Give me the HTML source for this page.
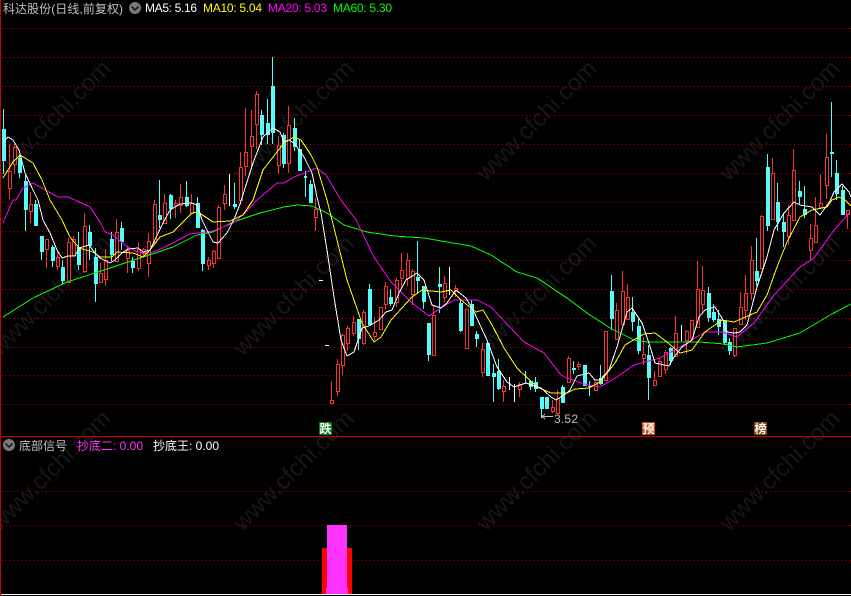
<!DOCTYPE html>
<html lang="zh"><head><meta charset="utf-8"><title>科达股份</title>
<style>
html,body{margin:0;padding:0;background:#000;width:851px;height:596px;overflow:hidden}
svg{display:block;position:absolute;left:0;top:0}
text{font-family:"Liberation Sans","Noto Sans CJK SC",sans-serif;font-size:12px}
.wm{font-size:24px;fill:#171717}
.l{fill:none;stroke-width:1;shape-rendering:crispEdges}
</style></head><body>
<svg width="851" height="596" viewBox="0 0 851 596" xmlns="http://www.w3.org/2000/svg">
<rect width="851" height="596" fill="#000"/>
<!-- watermarks -->
<g class="wm" text-anchor="middle">
<text class="wm" transform="translate(56,126) rotate(-45)">www.cfchi.com</text>
<text class="wm" transform="translate(299,126) rotate(-45)">www.cfchi.com</text>
<text class="wm" transform="translate(542,126) rotate(-45)">www.cfchi.com</text>
<text class="wm" transform="translate(785,126) rotate(-45)">www.cfchi.com</text>
<text class="wm" transform="translate(56,301) rotate(-45)">www.cfchi.com</text>
<text class="wm" transform="translate(299,301) rotate(-45)">www.cfchi.com</text>
<text class="wm" transform="translate(542,301) rotate(-45)">www.cfchi.com</text>
<text class="wm" transform="translate(785,301) rotate(-45)">www.cfchi.com</text>
<text class="wm" transform="translate(56,476) rotate(-45)">www.cfchi.com</text>
<text class="wm" transform="translate(299,476) rotate(-45)">www.cfchi.com</text>
<text class="wm" transform="translate(542,476) rotate(-45)">www.cfchi.com</text>
<text class="wm" transform="translate(785,476) rotate(-45)">www.cfchi.com</text>
</g>
<!-- grid -->
<path stroke="#b00000" stroke-width="1" stroke-dasharray="1 3" fill="none" shape-rendering="crispEdges" d="M2 28.5H851M2 57.5H851M2 86.5H851M2 115.5H851M2 144.5H851M2 173.5H851M2 202.5H851M2 231.5H851M2 260.5H851M2 289.5H851M2 318.5H851M2 347.5H851M2 375.5H851M2 404.5H851M2 491.5H851M2 525.5H851M2 560.5H851"/>
<g shape-rendering="crispEdges">
<!-- cyan wicks -->
<path stroke="#55fcfc" fill="none" d="M3.5 109V174M19.5 155V178M25.5 174V231M35.5 200V226M41.5 236V260M52.5 245V267M62.5 260V284M78.5 232V270M89.5 225V260M95.5 248V302M111.5 232V261M121.5 222V250M132.5 257V273M159.5 180V228M170.5 194V219M186.5 181V207M197.5 197V228M202.5 229V271M234.5 183V209M261.5 110V145M267.5 99V144M272.5 57V144M283.5 133V168M294.5 118V151M299.5 140V171M305.5 171V197M310.5 180V203M358.5 319V350M369.5 284V326M390.5 289V306M417.5 241V294M423.5 286V309M428.5 323V361M439.5 267V313M460.5 300V332M471.5 300V326M476.5 331V347M487.5 341V376M493.5 364V402M498.5 359V390M525.5 371V383M530.5 380V390M535.5 377V392M541.5 397V418M546.5 397V409M562.5 385V403M573.5 361V374M584.5 365V386M589.5 381V396M600.5 365V385M611.5 275V330M632.5 297V331M638.5 319V354M648.5 345V400M670.5 347V365M708.5 287V322M713.5 304V322M718.5 310V335M724.5 320V345M729.5 338V355M756.5 238V286M767.5 154V231M777.5 183V231M783.5 213V247M799.5 181V205M804.5 186V218M831.5 102V177M836.5 160V200M842.5 186V215"/>
<!-- cyan bodies -->
<path fill="#55fcfc" d="M2 129h4V161h-4zM18 158h4V173h-4zM24 181h4V210h-4zM34 204h4V226h-4zM40 236h4V252h-4zM51 247h4V261h-4zM61 267h4V281h-4zM77 247h4V265h-4zM88 232h4V246h-4zM94 257h4V284h-4zM110 239h4V255h-4zM120 228h4V242h-4zM131 261h4V268h-4zM158 215h4V220h-4zM169 195h4V209h-4zM185 197h4V206h-4zM196 203h4V228h-4zM201 230h4V264h-4zM233 204h4V207h-4zM260 115h4V135h-4zM266 123h4V135h-4zM271 86h4V133h-4zM282 135h4V164h-4zM293 128h4V147h-4zM298 149h4V171h-4zM304 176h3V178h-3zM309 184h4V203h-4zM357 319h4V339h-4zM368 289h4V325h-4zM389 297h4V304h-4zM416 277h4V281h-4zM422 286h4V302h-4zM427 323h4V355h-4zM438 284h4V287h-4zM459 303h4V331h-4zM470 304h4V326h-4zM475 334h4V339h-4zM486 343h4V376h-4zM492 373h4V377h-4zM497 371h4V389h-4zM529 381h4V387h-4zM534 382h4V389h-4zM540 397h4V409h-4zM545 397h4V409h-4zM561 387h4V403h-4zM572 368h4V370h-4zM583 365h4V386h-4zM588 386h3V387h-3zM599 378h4V384h-4zM610 291h4V319h-4zM631 312h4V322h-4zM637 326h4V351h-4zM647 355h4V378h-4zM669 348h4V361h-4zM707 293h4V318h-4zM712 312h4V320h-4zM717 319h4V327h-4zM723 321h4V343h-4zM728 342h4V351h-4zM755 271h4V281h-4zM766 167h4V226h-4zM776 202h4V222h-4zM782 222h4V232h-4zM798 191h4V197h-4zM803 209h4V215h-4zM830 152h4V154h-4zM835 173h4V194h-4zM841 190h4V215h-4z"/>
<!-- white dojis -->
<path stroke="#fff" fill="none" d="M229.5 174V206M449.5 267V295M509.5 377V390M514.5 384V402M681.5 325V341M319 280.5H323M325 345.5H329"/>
<!-- red wicks -->
<path stroke="#f83232" fill="none" d="M9.5 144V199M14.5 144V174M30.5 192V223M46.5 239V268M57.5 250V270M68.5 238V283M73.5 236V256M84.5 213V273M100.5 263V283M105.5 249V286M116.5 219V262M127.5 246V273M138.5 242V271M143.5 248V257M148.5 233V277M154.5 200V244M164.5 194V224M175.5 200V218M180.5 184V213M191.5 194V213M208.5 257V270M213.5 250V268M218.5 205V258M224.5 185V210M240.5 152V205M245.5 108V176M251.5 110V170M256.5 91V149M278.5 136V174M288.5 106V173M315.5 198V231M331.5 381V404M337.5 359V396M342.5 334V375M347.5 326V351M353.5 316V336M363.5 310V345M374.5 317V340M380.5 307V330M385.5 282V310M396.5 278V307M401.5 253V289M407.5 253V286M412.5 269V305M433.5 306V355M444.5 276V302M455.5 285V297M466.5 309V348M482.5 343V377M503.5 380V402M519.5 382V397M552.5 400V413M557.5 390V413M568.5 356V382M578.5 362V370M595.5 381V391M605.5 331V381M616.5 303V340M622.5 271V325M627.5 284V320M643.5 337V365M654.5 371V386M659.5 358V377M665.5 350V374M675.5 316V356M686.5 330V354M691.5 320V340M697.5 261V327M702.5 266V313M734.5 328V357M740.5 292V325M745.5 275V320M751.5 246V300M761.5 215V269M772.5 158V220M788.5 205V245M793.5 149V220M810.5 224V261M815.5 197V242M820.5 174V208M826.5 134V199M847.5 210V229"/>
<!-- red bodies -->
<path stroke="#f83232" fill="#000" d="M8.5 171.5h3V188.5h-3zM13.5 147.5h3V164.5h-3zM29.5 204.5h3V211.5h-3zM45.5 239.5h3V249.5h-3zM56.5 257.5h3V266.5h-3zM67.5 242.5h3V282.5h-3zM72.5 239.5h3V255.5h-3zM83.5 226.5h3V271.5h-3zM99.5 273.5h3V282.5h-3zM104.5 260.5h3V279.5h-3zM115.5 232.5h3V261.5h-3zM126.5 250.5h3V258.5h-3zM137.5 249.5h3V268.5h-3zM142.5 249.5h3V253.5h-3zM147.5 241.5h3V263.5h-3zM153.5 204.5h3V242.5h-3zM163.5 203.5h3V223.5h-3zM174.5 203.5h3V205.5h-3zM179.5 197.5h3V205.5h-3zM190.5 203.5h3V213.5h-3zM207.5 260.5h3V265.5h-3zM212.5 251.5h3V263.5h-3zM217.5 207.5h3V258.5h-3zM223.5 194.5h3V203.5h-3zM239.5 167.5h3V200.5h-3zM244.5 152.5h3V166.5h-3zM250.5 136.5h3V146.5h-3zM255.5 94.5h3V124.5h-3zM277.5 145.5h3V165.5h-3zM287.5 125.5h3V163.5h-3zM314.5 209.5h3V217.5h-3zM330.5 400.5h3V403.5h-3zM336.5 364.5h3V391.5h-3zM341.5 335.5h3V365.5h-3zM346.5 328.5h3V343.5h-3zM352.5 322.5h3V333.5h-3zM362.5 312.5h3V343.5h-3zM373.5 332.5h3V336.5h-3zM379.5 307.5h3V329.5h-3zM384.5 286.5h3V304.5h-3zM395.5 280.5h3V302.5h-3zM400.5 270.5h3V278.5h-3zM406.5 260.5h3V278.5h-3zM411.5 271.5h3V294.5h-3zM432.5 315.5h3V355.5h-3zM443.5 283.5h3V297.5h-3zM454.5 288.5h3V291.5h-3zM465.5 309.5h3V348.5h-3zM481.5 349.5h3V372.5h-3zM502.5 386.5h3V391.5h-3zM518.5 384.5h3V389.5h-3zM551.5 407.5h3V411.5h-3zM556.5 398.5h3V413.5h-3zM567.5 358.5h3V382.5h-3zM577.5 364.5h3V366.5h-3zM594.5 382.5h3V390.5h-3zM604.5 331.5h3V380.5h-3zM615.5 310.5h3V339.5h-3zM621.5 291.5h3V324.5h-3zM626.5 297.5h3V319.5h-3zM642.5 354.5h3V358.5h-3zM653.5 380.5h3V385.5h-3zM658.5 361.5h3V376.5h-3zM664.5 352.5h3V369.5h-3zM674.5 333.5h3V356.5h-3zM685.5 331.5h3V340.5h-3zM690.5 320.5h3V338.5h-3zM696.5 289.5h3V327.5h-3zM701.5 290.5h3V304.5h-3zM733.5 328.5h3V355.5h-3zM739.5 307.5h3V324.5h-3zM744.5 293.5h3V310.5h-3zM750.5 260.5h3V293.5h-3zM760.5 216.5h3V268.5h-3zM771.5 173.5h3V219.5h-3zM787.5 215.5h3V236.5h-3zM792.5 170.5h3V220.5h-3zM809.5 238.5h3V250.5h-3zM814.5 225.5h3V242.5h-3zM819.5 203.5h3V207.5h-3zM825.5 157.5h3V185.5h-3zM846.5 210.5h3V214.5h-3z"/>
</g>
<!-- moving averages -->
<polyline class="l" stroke="#00ff00" points="3,317 33,298 67,282 95,273 140,258 173,247 197,235 213,232 233,222 260,213 284,207 297,205 312,206 327,213 344,225 367,232 394,236 424,238 447,242 471,246 491,255 517,272 537,278 567,298 587,313 610,328 634,340 647,342 700,342 724,344 737,347 767,343 800,333 830,315 851,304"/>
<polyline class="l" stroke="#ff00ff" points="3,223 13,200 16,200 23,188 33,183 47,191 58,197 68,197 75,200 90,207 100,222 105,232 113,235 125,245 137,252 150,253 163,248 190,234 213,231 233,223 245,213 257,200 277,183 284,183 294,177 317,168 326,175 341,200 356,220 374,257 391,282 412,303 429,316 441,308 454,300 477,300 491,307 524,342 544,353 561,375 567,378 584,384 600,387 617,377 634,365 660,358 680,347 705,332 722,332 737,337 754,323 774,295 800,267 814,258 834,230 850,212"/>
<polyline class="l" stroke="#ffff00" points="3,178 13,162 20,155 33,163 42,180 50,200 62,220 70,237 79,248 93,252 100,257 112,257 117,252 133,253 143,257 150,250 160,237 173,232 192,213 198,212 213,222 230,221 243,215 251,203 253,200 263,170 277,152 284,143 294,137 301,140 311,155 317,167 327,200 337,240 347,280 362,323 374,342 381,337 391,320 412,297 422,290 441,292 451,290 461,300 476,312 483,310 492,325 504,348 517,368 537,387 551,393 567,393 575,389 589,388 600,382 615,363 625,345 644,334 655,333 667,342 680,353 692,350 705,332 722,320 734,322 757,312 767,295 777,267 787,242 800,217 812,210 827,207 832,200 839,197 845,200 851,206"/>
<polyline class="l" stroke="#ffffff" points="3,142 8,137 13,140 19,150 25,173 33,190 38,200 43,220 50,233 57,250 62,258 68,256 75,256 79,248 89,245 95,253 100,258 110,263 115,260 122,253 128,249 138,248 143,252 150,250 163,223 170,210 180,204 192,203 197,205 202,220 213,242 218,243 227,233 235,217 240,204 253,163 263,137 273,128 280,132 284,142 289,140 294,143 304,157 312,173 317,197 321,213 327,250 334,297 341,340 347,356 354,352 362,328 369,326 379,320 386,312 392,310 399,293 406,280 417,273 424,280 432,305 441,308 447,303 456,290 466,298 474,312 487,340 497,367 507,382 514,387 526,383 541,388 551,397 556,400 567,393 570,390 577,376 589,373 595,380 600,380 609,370 617,347 627,312 632,308 642,323 649,343 655,363 669,366 674,357 682,347 692,340 699,317 705,310 715,307 722,318 727,332 734,333 740,332 747,325 757,287 767,257 774,230 784,213 794,202 800,205 812,207 820,215 830,201 834,192 842,184 849,192 851,197"/>
<!-- low label -->
<path stroke="#c0c0c0" fill="none" d="M542 416.5H553M542 416.5L545 414M542 416.5L545 419" shape-rendering="crispEdges"/>
<text x="554" y="423" fill="#c0c0c0" textLength="24">3.52</text>
<!-- signal tags -->
<rect x="319" y="422" width="13" height="13" fill="#0a7d14"/>
<text x="319.5" y="433" fill="#fff" style="font-weight:700">跌</text>
<rect x="642" y="422" width="13" height="13" fill="#c04a08"/>
<text x="642.5" y="433" fill="#fff" style="font-weight:700">预</text>
<rect x="754" y="422" width="13" height="13" fill="#84420a"/>
<text x="754.5" y="433" fill="#fff" style="font-weight:700">榜</text>
<!-- panel frame -->
<g shape-rendering="crispEdges">
<rect x="0" y="436" width="851" height="1" fill="#d00000"/>
<rect x="0" y="594" width="851" height="1" fill="#fff"/>
<rect x="0" y="0" width="1" height="596" fill="#d00000"/>
<!-- histogram -->
<rect x="322" y="548" width="30" height="46" fill="#ff0000"/>
<rect x="327" y="525" width="20" height="69" fill="#ff33ff"/>
<rect x="326" y="588" width="22" height="6" fill="#ff33ff"/>
</g>
<!-- header -->
<text x="3" y="13" fill="#c0c0c0" textLength="120">科达股份(日线,前复权)</text>
<circle cx="135" cy="8" r="6" fill="#7a7a7a"/>
<path d="M131.5 6.5L135 10L138.5 6.5" stroke="#111" stroke-width="1.5" fill="none"/>
<text x="145" y="12" fill="#ffffff" textLength="52">MA5: 5.16</text>
<text x="203" y="12" fill="#ffff00" textLength="59">MA10: 5.04</text>
<text x="268" y="12" fill="#ff00ff" textLength="59">MA20: 5.03</text>
<text x="333" y="12" fill="#00ff00" textLength="59">MA60: 5.30</text>
<!-- lower header -->
<circle cx="9" cy="445" r="6" fill="#7a7a7a"/>
<path d="M5.5 443.5L9 447L12.5 443.5" stroke="#111" stroke-width="1.5" fill="none"/>
<text x="19" y="450" fill="#c0c0c0" textLength="48">底部信号</text>
<text x="77" y="450" fill="#ff33ff" textLength="66">抄底二: 0.00</text>
<text x="153" y="450" fill="#ffffff" textLength="66">抄底王: 0.00</text>
</svg>
</body></html>
